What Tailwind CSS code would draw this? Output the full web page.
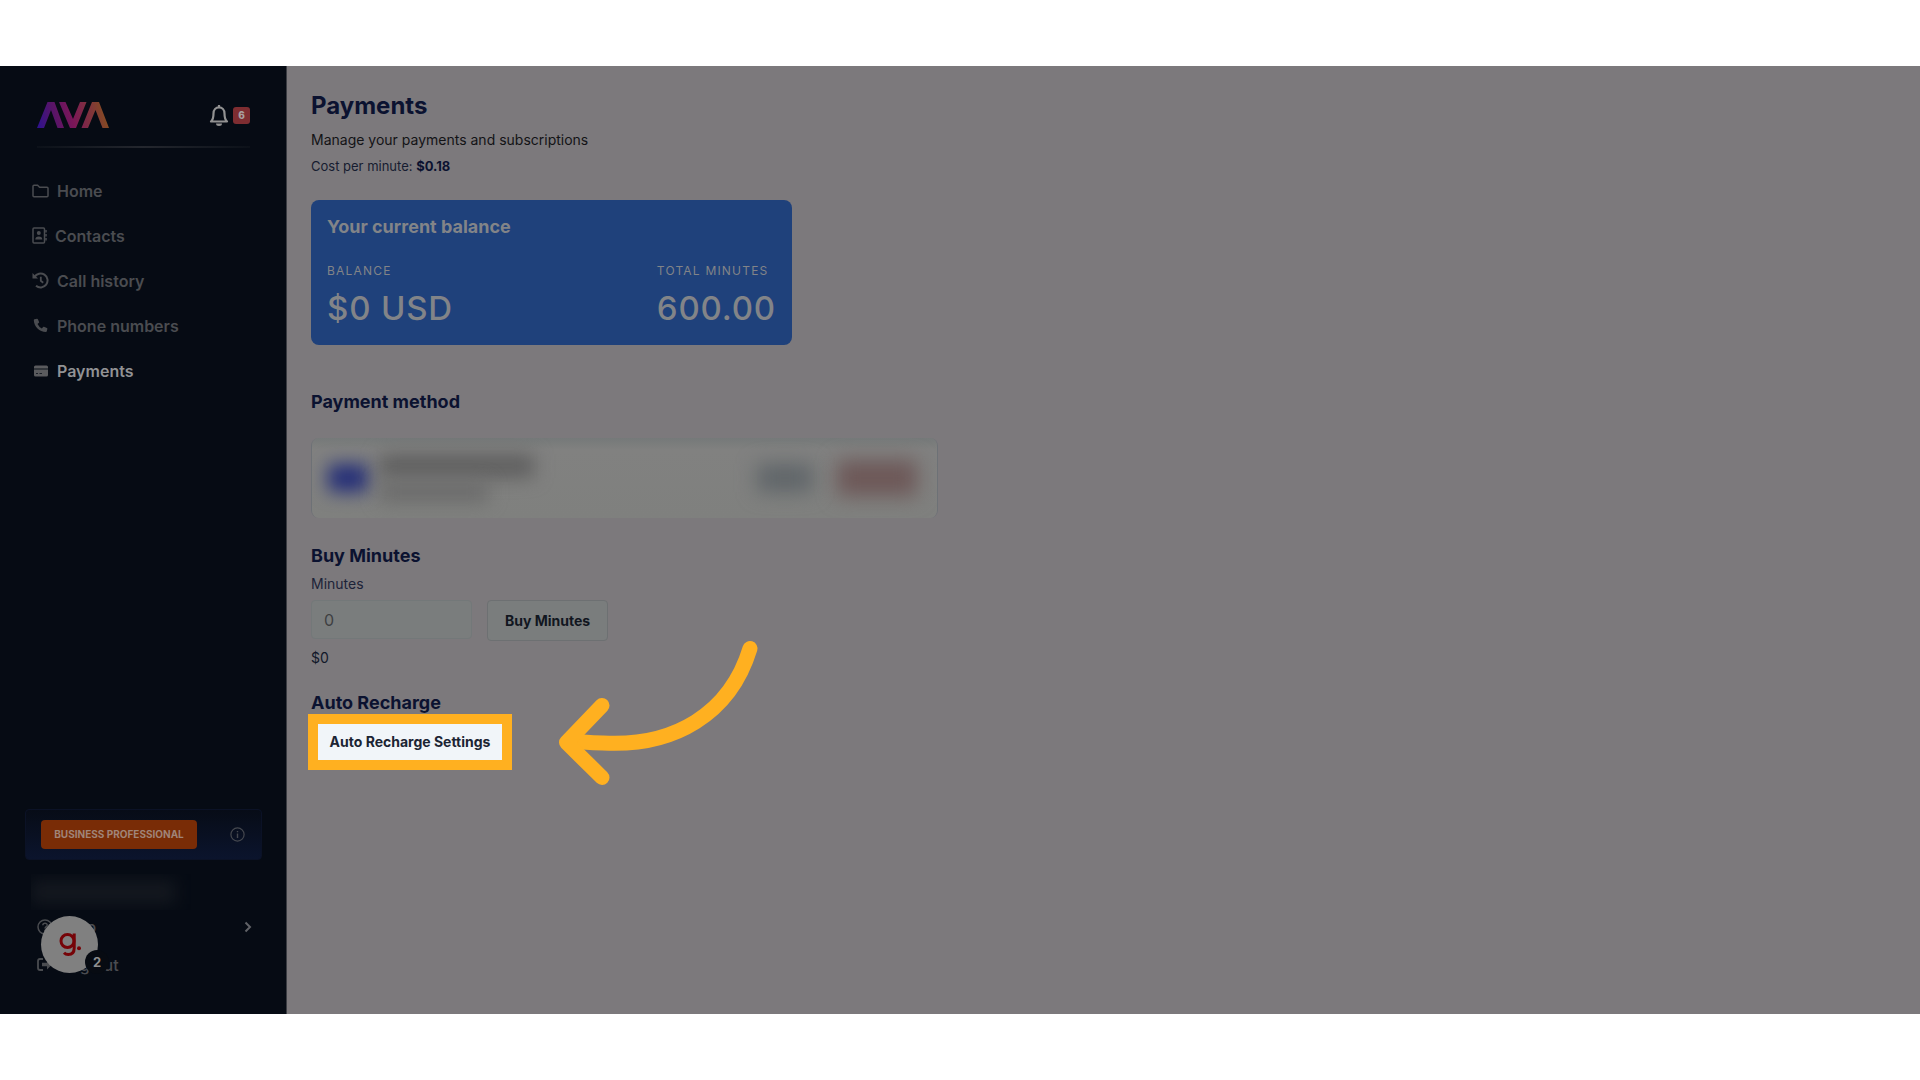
<!DOCTYPE html>
<html lang="en">
<head>
  <meta charset="UTF-8" />
  <meta name="viewport" content="width=device-width, initial-scale=1.0" />
  <title>AVA – Payments</title>
  <script src="https://cdn.jsdelivr.net/npm/@tailwindcss/browser@4"></script>
</head>
<body class="min-h-screen bg-white flex flex-col pt-[66px] pb-[66px] font-['Inter',sans-serif]">
  <div class="flex-1 flex bg-[#7c797c]">

    <!-- Sidebar -->
    <aside class="w-[287px] shrink-0 flex flex-col bg-[#060b14] border-r border-[#3b3d43] pt-9 pb-7">
      <div class="flex items-center justify-between pl-[37px] pr-9">
        <svg class="w-18 h-[26px]" viewBox="0 0 72 26" role="img" aria-label="AVA">
          <defs>
            <linearGradient id="brand" gradientUnits="userSpaceOnUse" x1="0" y1="26" x2="72" y2="10">
              <stop offset="0" stop-color="#2c1290" />
              <stop offset="0.25" stop-color="#561468" />
              <stop offset="0.5" stop-color="#7a1658" />
              <stop offset="0.72" stop-color="#7f3040" />
              <stop offset="1" stop-color="#85501c" />
            </linearGradient>
          </defs>
          <path fill="url(#brand)" d="M0 26 10.500 0h7L27 26h-6.500L14 8 7 26zM22 0h6.500l7.500 17L43 0h6.500L39 26h-6zM44.500 26 55 0h7l10 26h-6.500L58.500 8 51 26z" />
        </svg>
        <button class="flex items-center gap-1 text-[#929292]" aria-label="Notifications">
          <svg class="w-5 h-6" viewBox="0 0 20 24" fill="none" stroke="currentColor" stroke-width="2.200">
            <path d="M2 18.500h16c-2-1.800-2.500-3.500-2.500-8C15.500 6.500 13 4.300 10 4.300S4.500 6.500 4.500 10.500c0 4.500-.5 6.200-2.500 8z" stroke-linejoin="round" />
            <path d="M10 4.500V2" />
            <path d="M7 20.500h6a3 2.500 0 0 1-6 0z" fill="currentColor" stroke="none" />
          </svg>
          <span class="w-[17px] h-[17px] rounded-[3px] bg-[#7e2d31] text-[#a8a0a0] text-[10px] leading-[17px] font-extrabold text-center">6</span>
        </button>
      </div>
      <div class="h-[2px] mt-[18px] ml-[37px] mr-9 bg-linear-to-r from-[#0c1119] via-[#24272e] to-[#0c1119]"></div>

      <nav class="mt-5 pl-8 flex flex-col text-base font-semibold text-[#4a4c50]">
        <a href="#" class="h-[45px] flex items-center gap-2">
          <svg class="w-[17px] h-4" viewBox="0 0 17 16" fill="none" stroke="currentColor" stroke-width="1.500"><path d="M1 3.200q0-1 1-1h3.600l2 2H15q1 0 1 1v7.600q0 1-1 1H2q-1 0-1-1z" /></svg>
          Home
        </a>
        <a href="#" class="h-[45px] flex items-center gap-2">
          <svg class="w-[15px] h-[17px]" viewBox="0 0 15 17" fill="none" stroke="currentColor" stroke-width="1.500">
            <rect x="1" y="1" width="11.500" height="15" rx="1" />
            <path d="M14 3v2.500M14 7v2.500M14 11v2.500" />
            <circle cx="6.800" cy="6" r="2" fill="currentColor" stroke="none" />
            <path d="M3.300 12.500q0-3 3.500-3t3.500 3z" fill="currentColor" stroke="none" />
          </svg>
          Contacts
        </a>
        <a href="#" class="h-[45px] flex items-center gap-2">
          <svg class="w-[17px] h-[17px]" viewBox="0 0 17 17" fill="none" stroke="currentColor" stroke-width="2">
            <path d="M2.500 5A7 7 0 1 1 4 13.800" />
            <path d="M.5 1v5.500H6z" fill="currentColor" stroke="none" />
            <path d="M8.800 4.800v4l2.400 2" stroke-width="1.800" />
          </svg>
          Call history
        </a>
        <a href="#" class="h-[45px] flex items-center gap-2">
          <svg class="w-[17px] h-[17px]" viewBox="0 0 17 17" fill="currentColor"><path d="M2.500 2.300 5 1.700q.6-.1.900.5l1.200 2.700q.2.500-.2.900L5.500 7q1.400 2.900 4.300 4.400l1.300-1.500q.3-.4.900-.2l2.900 1.200q.6.300.5.900l-.6 2.500q-.2.700-.9.700C7.500 15 2 9.500 1.800 3.200q0-.7.700-.9z" /></svg>
          Phone numbers
        </a>
        <a href="#" class="h-[45px] flex items-center gap-2 text-[#919294]">
          <svg class="w-[17px] h-4 text-[#5a5b5e]" viewBox="0 0 17 16"><rect x="2" y="2.500" width="14" height="11" rx="1.500" fill="currentColor" /><path d="M2 6h14" stroke="#262a31" stroke-width="1.500" /><path d="M4 10.500h2M7.500 10.500h2.500" stroke="#1c2028" stroke-width="1.200" /></svg>
          Payments
        </a>
      </nav>

      <div class="mt-auto ml-[25px] mr-6 h-[51px] rounded border border-[#0b1226] bg-linear-to-b from-[#070c17] to-[#0b142d] flex items-center justify-between pl-[15px] pr-4">
        <span class="w-39 h-[29px] rounded bg-[#792c06] text-[#a08478] text-[10px] leading-[29px] font-bold text-center">BUSINESS PROFESSIONAL</span>
        <svg class="w-[15px] h-[15px] text-[#45484f]" viewBox="0 0 15 15" fill="none" stroke="currentColor" stroke-width="1.200"><circle cx="7.500" cy="7.500" r="6.600" /><path d="M7.500 6.500V11M7.500 4v1.300" stroke-width="1.400" /></svg>
      </div>

      <!-- Masked account name -->
      <div class="mt-[14px] ml-[31px] w-[160px] h-9 overflow-hidden flex items-center">
        <div class="w-[144px] h-6 bg-[#14181f] blur-[8px]"></div>
      </div>

      <div class="relative pl-[37px] pr-[34px] text-base font-medium text-[#4a4c50]">
        <a href="#" class="h-[34px] flex items-center gap-2">
          <svg class="w-4 h-4" viewBox="0 0 16 16" fill="none" stroke="currentColor" stroke-width="1.500"><circle cx="8" cy="8" r="7" /><path d="M5.800 6.200c.2-2.900 4.600-2.500 4.400 0C10.100 7.700 8 7.700 8 9.500M8 10.800v1.400" /></svg>
          Help
          <svg class="ml-auto w-2 h-3 text-[#606267]" viewBox="0 0 8 12" fill="none" stroke="currentColor" stroke-width="2"><path d="m1.500 1.500 4.500 4.500-4.500 4.500" /></svg>
        </a>
        <a href="#" class="h-[42px] flex items-center gap-2">
          <svg class="w-4 h-4" viewBox="0 0 16 16" fill="none" stroke="currentColor" stroke-width="1.800"><path d="M6 2H3Q1 2 1 4v7q0 2 2 2h3" /><path d="M5 5.800h5V2.500l5 5-5 5V9.200H5z" fill="currentColor" stroke="none" /></svg>
          Log out
        </a>
        <!-- Floating chat launcher -->
        <button class="absolute left-[41px] top-[6px] w-[57px] h-[57px] rounded-full bg-[#808080]" aria-label="Open guide, 2 new">
          <svg class="w-[57px] h-[57px]" viewBox="0 0 57 57" fill="none" stroke="#760408" stroke-width="3"><circle cx="26.500" cy="25" r="6.500" /><path d="M33.200 17.500V32q0 6.500-6 6.500-2.500 0-4.200-1.800" /><circle cx="38" cy="32.300" r="2" fill="#760408" stroke="none" /></svg>
          <span class="absolute left-11 top-[34px] w-6 h-6 rounded-full bg-[#070b12] text-[#8e8e8e] text-[13px] leading-6 font-bold text-center">2</span>
        </button>
      </div>
    </aside>

    <!-- Content -->
    <main class="relative flex-1 px-6 pt-6 text-[#0b1230]">
      <h1 class="text-2xl leading-8 font-bold">Payments</h1>
      <p class="mt-2 text-sm leading-5 text-[#131316]">Manage your payments and subscriptions</p>
      <p class="mt-2 text-[13px] leading-4 text-[#161c30]">Cost per minute: <strong class="font-bold text-[#0b1230]">$0.18</strong></p>

      <section class="mt-[26px] w-full max-w-[481px] rounded-lg bg-[#1f417b] text-[#828488] px-4 pt-[15px] pb-[18px]">
        <h2 class="text-lg leading-6 font-bold">Your current balance</h2>
        <div class="mt-6 flex justify-between">
          <div>
            <p class="text-xs leading-4 tracking-widest">BALANCE</p>
            <p class="mt-[10px] text-[33px] leading-[38px] font-medium tracking-wide">$0 USD</p>
          </div>
          <div>
            <p class="text-xs leading-4 tracking-widest">TOTAL MINUTES</p>
            <p class="mt-[10px] text-[33px] leading-[38px] font-medium tracking-wide">600.00</p>
          </div>
        </div>
      </section>

      <h2 class="mt-[45px] text-lg leading-6 font-bold">Payment method</h2>
      <!-- Card details stay masked -->
      <section class="mt-6 w-full max-w-[627px] h-20 rounded-lg border-x border-[#6d7176] bg-[#80807f] overflow-hidden" aria-label="Saved card">
        <div class="w-full h-full bg-linear-to-b from-[#757979] via-[#818180] via-15% to-[#7f807e] flex items-center pl-4 pr-5">
          <div class="w-10 h-7 rounded bg-[#252f78] blur-[9px]"></div>
          <div class="ml-3 flex flex-col gap-1">
            <div class="w-[154px] h-6 bg-[#606060] blur-[9px]"></div>
            <div class="w-[108px] h-5 bg-[#6b6b6b] blur-[9px]"></div>
          </div>
          <div class="ml-auto w-14 h-7 bg-[#5f6569] blur-[10px]"></div>
          <div class="ml-6 w-20 h-9 bg-[#6d5858] blur-[10px]"></div>
        </div>
      </section>

      <h2 class="mt-[26px] text-lg leading-6 font-bold">Buy Minutes</h2>
      <form class="flex flex-wrap gap-x-[15px]">
        <div>
          <label for="minutes" class="block mt-[7px] mb-[7px] text-sm leading-[18px] text-[#1c2338]">Minutes</label>
          <input id="minutes" type="text" value="0" class="block w-[161px] h-[39px] rounded border border-[#737879] bg-[#7a7d7d] px-3 text-base text-[#3e4042]" />
        </div>
        <button type="button" class="mt-8 w-[121px] h-[41px] rounded border border-[#6d7072] bg-[#7a7d7d] text-sm font-bold text-[#11161f]">Buy Minutes</button>
      </form>
      <p class="mt-2 text-sm leading-[18px] text-[#111829]">$0</p>

      <h2 class="mt-6 text-lg leading-6 font-bold">Auto Recharge</h2>
      <div class="-ml-[3px] -mt-[1px] relative w-max">
        <button class="block w-[204px] h-[56px] border-[10px] border-[#ffb020] bg-[#f1f5f9] text-sm font-bold text-[#1b2433]">Auto Recharge Settings</button>
        <svg class="absolute left-[250px] -top-[75px] w-[204px] h-[150px]" viewBox="0 0 204 150" fill="none" stroke="#ffb020" stroke-width="15" stroke-linecap="round" stroke-linejoin="round">
          <path d="M192 9.500C172 75 116 108 45 104q-9 0-20-1" />
          <path d="M44 66.500 8.500 103.500 44 138.500" />
        </svg>
      </div>
    </main>
  </div>
</body>
</html>
